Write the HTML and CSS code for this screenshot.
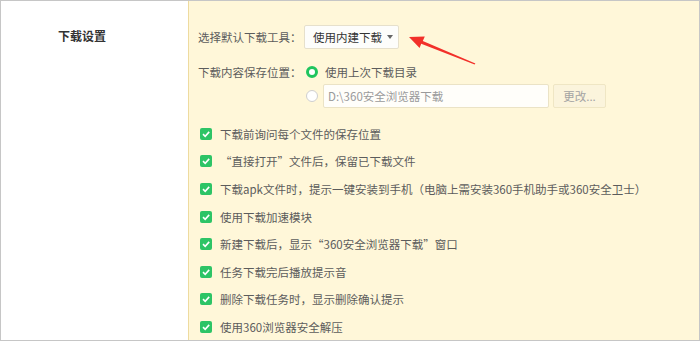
FILE: index.html
```html
<!DOCTYPE html>
<html lang="zh-CN">
<head>
  <meta charset="UTF-8" />
  <title>下载设置</title>
  <link rel="stylesheet" href="styles.css">
</head>
<body>
  <div class="panel">
    <div class="side">
      <h3 class="side-title">下载设置</h3>
    </div>
    <div class="main">
      <!-- default download tool -->
      <div class="row row-tool">
        <span class="label">选择默认下载工具：</span>
        <div class="select">使用内建下载<span class="caret"></span></div>
        <svg class="pointer" width="85" height="45" viewBox="0 0 85 45">
          <polygon fill="#f2302a" points="11,12 26.8,11.6 24.8,16 77.4,38.4 76.6,39.6 23.2,18.8 21.6,23" />
        </svg>
      </div>

      <!-- save location -->
      <div class="row row-path">
        <span class="label">下载内容保存位置：</span>
        <div class="radios">
          <div class="radio-item"><span class="radio on"></span>使用上次下载目录</div>
          <div class="radio-item">
            <span class="radio"></span>
            <div class="path-input">D:\360安全浏览器下载</div>
            <button class="btn" type="button">更改...</button>
          </div>
        </div>
      </div>

      <!-- options -->
      <ul class="checks">
        <li><span class="check"></span>下载前询问每个文件的保存位置</li>
        <li><span class="check"></span>“直接打开”文件后，保留已下载文件</li>
        <li><span class="check"></span>下载apk文件时，提示一键安装到手机（电脑上需安装360手机助手或360安全卫士）</li>
        <li><span class="check"></span>使用下载加速模块</li>
        <li><span class="check"></span>新建下载后，显示“360安全浏览器下载”窗口</li>
        <li><span class="check"></span>任务下载完后播放提示音</li>
        <li><span class="check"></span>删除下载任务时，显示删除确认提示</li>
        <li><span class="check"></span>使用360浏览器安全解压</li>
      </ul>
    </div>
  </div>
</body>
</html>
```

FILE: styles.css
```css
body {
  margin: 0;
  background: #fff;
  font-family: "Noto Sans CJK SC", "Microsoft YaHei", sans-serif;
  font-size: 11.5px;
  color: #5c5c5c;
}

.panel {
  box-sizing: border-box;
  width: 700px;
  height: 341px;
  border: 1px solid #c6c6c6;
  display: flex;
  overflow: hidden;
}

.side {
  width: 188px;
  background: #fff;
  border-right: 1px solid #eedb9f;
  padding: 27px 0 0 57px;
  box-sizing: border-box;
  flex-shrink: 0;
}

.side-title {
  margin: 0;
  font-size: 12px;
  line-height: 16px;
  font-weight: bold;
  color: #333;
}

.main {
  flex: 1;
  background: #fff7d9;
  padding: 24px 0 0 9px;
}

.row {
  display: flex;
}

.label {
  width: 106px;
  flex-shrink: 0;
}

.row-tool {
  position: relative;
  align-items: center;
  height: 24px;
}

.select {
  box-sizing: border-box;
  width: 95px;
  height: 24px;
  padding: 0 5px 0 8px;
  display: flex;
  align-items: center;
  justify-content: space-between;
  background: #fdfdfb;
  border: 1px solid #e6e0cc;
  border-radius: 2px;
  color: #333;
}

.caret {
  width: 0;
  height: 0;
  border-left: 3.5px solid transparent;
  border-right: 3.5px solid transparent;
  border-top: 4px solid #666;
}

.pointer {
  position: absolute;
  left: 200px;
  top: 0;
}

.row-path {
  margin-top: 13px;
}

.row-path .label {
  line-height: 20px;
}

.radio-item {
  display: flex;
  align-items: center;
  height: 20px;
}

.radio-item + .radio-item {
  height: 24px;
  margin-top: 2px;
}

.radio {
  box-sizing: border-box;
  width: 12px;
  height: 12px;
  margin: 0 7px 0 2px;
  border-radius: 50%;
  background: #fff;
  border: 1px solid #cfcfcf;
}

.radio.on {
  border: 3.5px solid #1fc55e;
}

.radio-item + .radio-item .radio {
  margin-right: 5px;
}

.path-input {
  box-sizing: border-box;
  width: 226px;
  height: 24px;
  line-height: 22px;
  padding-left: 4px;
  background: #fffefa;
  border: 1px solid #ebe3c6;
  border-radius: 2px;
  color: #9a9a9a;
}

.btn {
  box-sizing: border-box;
  width: 53px;
  height: 24px;
  margin-left: 4px;
  padding: 0;
  background: #fbf4dc;
  border: 1px solid #efe6c4;
  border-radius: 2px;
  font: inherit;
  color: #a3a3a3;
}

.checks {
  list-style: none;
  margin: 12px 0 0;
  padding: 0;
}

.checks li {
  height: 27.6px;
  display: flex;
  align-items: center;
}

.check {
  width: 12px;
  height: 12px;
  margin: 0 8px 0 2px;
  border-radius: 2px;
  background: #2dc466 url("data:image/svg+xml;utf8,<svg xmlns='http://www.w3.org/2000/svg' width='12' height='12'><path d='M3 6.2 L5.2 8.3 L9.2 3.9' fill='none' stroke='white' stroke-width='1.6'/></svg>") no-repeat center;
}
```
